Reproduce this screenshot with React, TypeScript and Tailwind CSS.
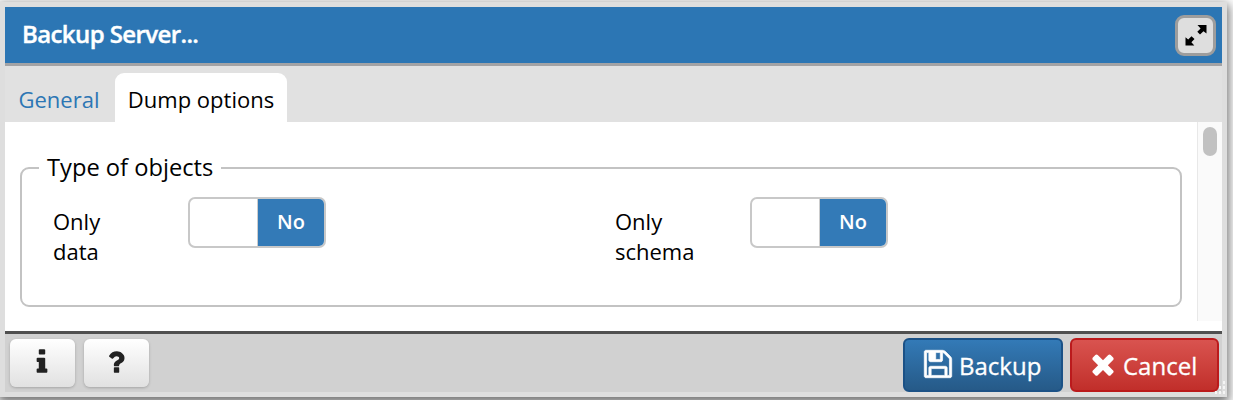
import React from "react";

function Icon({ d, className }: { d: string; className: string }) {
  return (
    <svg viewBox="0 0 1792 1792" fill="currentColor" className={className} aria-hidden="true">
      <path d={d} />
    </svg>
  );
}

const SAVE =
  "M512 1536h768v-384h-768v384zm896 0h128v-896q0-14-10-38.5t-20-34.5l-281-281q-10-10-34-20t-39-10v416q0 40-28 68t-68 28h-576q-40 0-68-28t-28-68v-416h-128v1280h128v-416q0-40 28-68t68-28h832q40 0 68 28t28 68v416zm-384-928v-320q0-13-9.5-22.5t-22.5-9.5h-192q-13 0-22.5 9.5t-9.5 22.5v320q0 13 9.5 22.5t22.5 9.5h192q13 0 22.5-9.5t9.5-22.5zm640 32v928q0 40-28 68t-68 28h-1344q-40 0-68-28t-28-68v-1344q0-40 28-68t68-28h928q40 0 88 20t76 48l280 280q28 28 48 76t20 88z";
const CLOSE =
  "M1490 1322q0 40-28 68l-136 136q-28 28-68 28t-68-28l-294-294-294 294q-28 28-68 28t-68-28l-136-136q-28-28-28-68t28-68l294-294-294-294q-28-28-28-68t28-68l136-136q28-28 68-28t68 28l294 294 294-294q28-28 68-28t68 28l136 136q28 28 28 68t-28 68l-294 294 294 294q28 28 28 68z";
const INFO =
  "M1216 1344v128q0 26-19 45t-45 19h-512q-26 0-45-19t-19-45v-128q0-26 19-45t45-19h64v-384h-64q-26 0-45-19t-19-45v-128q0-26 19-45t45-19h384q26 0 45 19t19 45v576h64q26 0 45 19t19 45zm-128-1152v192q0 26-19 45t-45 19h-256q-26 0-45-19t-19-45v-192q0-26 19-45t45-19h256q26 0 45 19t19 45z";
const HELP =
  "M1088 1256v240q0 16-12 28t-28 12h-240q-16 0-28-12t-12-28v-240q0-16 12-28t28-12h240q16 0 28 12t12 28zm316-600q0 54-15.5 101t-35 76.5-55 59.5-57.5 43.5-61 35.5q-41 23-68.5 65t-27.5 67q0 17-12 32.5t-28 15.5h-240q-15 0-25.5-18.5t-10.5-37.5v-45q0-83 65-156.5t143-108.5q59-27 84-56t25-76q0-42-46.5-74t-107.5-32q-65 0-108 29-35 25-107 115-13 16-31 16-12 0-25-8l-164-125q-13-10-15.5-25t5.5-28q160-266 464-266 80 0 161 31t146 83 106 127.5 41 158.5z";

function SwitchField({ label }: { label: string }) {
  return (
    <div className="flex w-[562px] shrink-0 items-start">
      <div className="mt-[9px] w-[100px] pr-[20px] text-[22px] leading-[30px]">{label}</div>
      <button
        role="switch"
        aria-checked="false"
        className="ml-[35px] flex h-[51px] w-[138px] overflow-hidden rounded-[7px] border-2 border-[#c8c8c8] bg-white"
      >
        <span className="h-full w-[68px] border-r border-[#ccc]" />
        <span className="flex h-full flex-1 items-center justify-center bg-[#337ab7] pb-px text-[20px] font-semibold text-white">
          No
        </span>
      </button>
    </div>
  );
}

function SmallButton({ d, label }: { d: string; label: string }) {
  return (
    <button
      aria-label={label}
      className="flex h-[48px] w-[65px] items-center justify-center rounded-[6px] bg-linear-to-b from-white to-[#e1e1e1] text-[#222] shadow-[0_1px_3px_rgba(0,0,0,0.22)]"
    >
      <Icon d={d} className="mr-px mb-[3px] size-[30px]" />
    </button>
  );
}

export default function App() {
  return (
    <div className="h-[400px] w-[1233px] overflow-hidden bg-white pt-[2px] font-['Open_Sans','Noto_Sans',sans-serif] text-black">
      <div className="relative flex h-[395px] w-[1227px] flex-col bg-[#dedede] pt-[5px] pr-[5px] pl-[5px] shadow-[0_4px_10px_2px_rgba(0,0,0,0.55)]">
        <header className="flex h-[59px] shrink-0 items-center justify-between border-b-[3px] border-[#a3a3a5] bg-[#2c76b4] pr-[6px] pl-[17px]">
          <h1 className="pb-[2px] text-[24px] font-semibold tracking-[-0.6px] text-white [-webkit-text-stroke:0.4px_white]">
            Backup Server...
          </h1>
          <button
            aria-label="Maximize"
            className="flex size-[41px] items-center justify-center rounded-[9px] border-[3px] border-[#9d9d9d] bg-[#dedede]"
          >
            <svg viewBox="0 0 22 22" className="size-[22px]" fill="black" aria-hidden="true">
              <path d="M12.500 1H21.500V9.500L18.500 7.200 15 10.400 12.300 7.800 15.600 4.500z" />
              <path d="M0.500 21.500V13.300L3.200 15.500 6.500 12.200 9.500 15.100 6.400 18.300 9.300 21.500z" />
            </svg>
          </button>
        </header>
        <nav className="flex h-[56px] shrink-0 items-end bg-[#e1e1e1] text-[22px]">
          <button className="h-[49px] w-[110px] pr-[2px] pt-[3px] text-[#2c76b4]">General</button>
          <button className="h-[49px] w-[172px] rounded-t-[9px] bg-white pt-[3px]">Dump options</button>
        </nav>
        <main className="flex h-[209px] shrink-0 bg-white">
          <div className="min-w-0 flex-1 pt-[30px] pl-[15px]">
            <fieldset className="h-[155px] w-[1162px] min-w-0 rounded-[9px] border-2 border-[#c3c3c3] pl-[31px]">
              <legend className="-ml-[14px] px-[8px] pb-[2px] text-[23.700px] leading-[30px]">Type of objects</legend>
              <div className="flex pt-[13px]">
                <SwitchField label="Only data" />
                <SwitchField label="Only schema" />
              </div>
            </fieldset>
          </div>
          <div className="flex h-[199px] w-[25px] shrink-0 justify-center border-l border-[#e8e8e8] bg-[#fafafa] pt-[5px]">
            <div className="h-[29px] w-[14px] rounded-full bg-[#c1c1c1]" />
          </div>
        </main>
        <footer className="flex h-[61px] shrink-0 items-start justify-between border-t-[3px] border-[#505050] bg-[#d1d1d1] pt-[4px] pr-[3px] pl-[5px]">
          <div className="flex gap-[9px] pt-px">
            <SmallButton d={INFO} label="Information" />
            <SmallButton d={HELP} label="Help" />
          </div>
          <div className="flex gap-[7px] text-[24px] text-white">
            <button className="flex h-[54px] w-[160px] items-center rounded-[6px] border-2 border-[#1b5186] bg-linear-to-b from-[#337ab7] to-[#265a88] pl-[17px]">
              <Icon d={SAVE} className="mb-[3px] size-[32px] stroke-white stroke-[40]" />
              <span className="ml-[5px] pt-[1px] font-medium [-webkit-text-stroke:0.3px_white]">Backup</span>
            </button>
            <button className="flex h-[54px] w-[149px] items-center rounded-[6px] border-2 border-[#bb1a1c] bg-linear-to-b from-[#d9534f] to-[#c12e2a] pl-[15px]">
              <Icon d={CLOSE} className="mb-[3px] size-[32px]" />
              <span className="ml-[4px] pt-[1px] font-medium [-webkit-text-stroke:0.3px_white]">Cancel</span>
            </button>
          </div>
        </footer>
        <svg viewBox="0 0 16 16" className="absolute right-0 bottom-px size-[16px]" fill="#f5f5f5" aria-hidden="true">
          <path d="M12 1h2v3h-2zM8 6h2v3H8zM12 6h2v3h-2zM4 11h2v3H4zM8 11h2v3H8zM12 11h2v3h-2z" />
        </svg>
      </div>
    </div>
  );
}
